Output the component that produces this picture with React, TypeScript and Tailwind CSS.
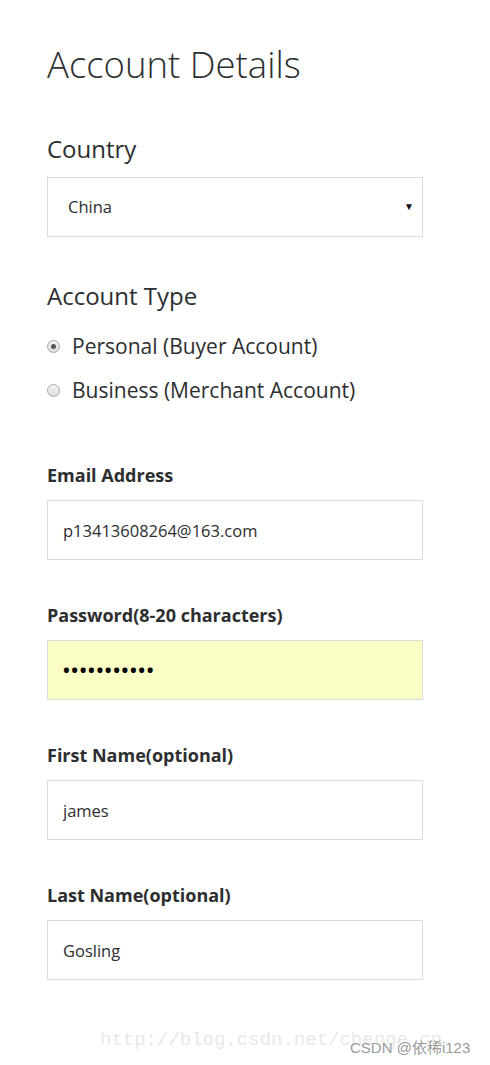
import { useState } from "react";

const labelCls = "block text-[18px] font-bold text-[#2c2e2f] leading-none";
const inputCls =
  "mt-[16px] block h-[60px] w-[376px] border border-[#dcdcdc] px-[15px] text-[16.5px] text-[#2c2e2f] outline-none";

export default function App() {
  const [type, setType] = useState("personal");

  return (
    <div className="relative min-h-[1065px] w-[490px] bg-white font-['Open_Sans',sans-serif] text-[#2c2e2f]">
      <div className="pl-[47px] pt-[40px]">
        <h1 className="text-[36.5px] font-light leading-[48px] text-[#2c2e2f]">Account Details</h1>

        {/* Country */}
        <h2 className="mt-[49px] text-[24px] font-medium leading-none">Country</h2>
        <div className="relative mt-[16px] flex h-[60px] w-[376px] items-center border border-[#dcdcdc] pl-[20px] text-[16.5px]">
          <span>China</span>
          <span className="absolute right-[8px] top-[21px] text-[10px] text-[#111]">▼</span>
        </div>

        {/* Account type */}
        <h2 className="mt-[47px] text-[24px] font-medium leading-none">Account Type</h2>
        <div className="mt-[26px] flex flex-col gap-[20px]">
          <label className="flex items-center gap-[12px] text-[21px] leading-[24px]">
            <span className="flex h-[13px] w-[13px] items-center justify-center rounded-full border border-[#a8a8a8] bg-gradient-to-b from-[#f4f4f4] to-[#dcdcdc]">
              {type === "personal" && <span className="h-[5px] w-[5px] rounded-full bg-[#555]" />}
            </span>
            <span onClick={() => setType("personal")}>Personal (Buyer Account)</span>
          </label>
          <label className="flex items-center gap-[12px] text-[21px] leading-[24px]">
            <span className="flex h-[13px] w-[13px] items-center justify-center rounded-full border border-[#a8a8a8] bg-gradient-to-b from-[#f4f4f4] to-[#dcdcdc]">
              {type === "business" && <span className="h-[5px] w-[5px] rounded-full bg-[#555]" />}
            </span>
            <span onClick={() => setType("business")}>Business (Merchant Account)</span>
          </label>
        </div>

        {/* Email */}
        <div className="mt-[64px]">
          <span className={labelCls}>Email Address</span>
          <input className={inputCls} defaultValue="p13413608264@163.com" />
        </div>

        <div className="mt-[46px]">
          <span className={labelCls}>Password(8-20 characters)</span>
          <div className="mt-[16px] flex h-[60px] w-[376px] items-center border border-[#dcdcdc] bg-[#fafec4] px-[15px] text-[18px] font-bold tracking-[1.6px] text-black">
            •••••••••••
          </div>
        </div>

        <div className="mt-[46px]">
          <span className={labelCls}>First Name(optional)</span>
          <input className={inputCls} defaultValue="james" />
        </div>

        <div className="mt-[46px]">
          <span className={labelCls}>Last Name(optional)</span>
          <input className={inputCls} defaultValue="Gosling" />
        </div>
      </div>

      {/* watermark */}
      <div className="absolute left-[100px] top-[1026px] font-['Liberation_Mono',monospace] text-[19px] text-[#e8e8e8]">
        http://blog.csdn.net/chenge_cn
      </div>
      <div className="absolute left-[350px] top-[1037px] font-['Liberation_Sans','Noto_Sans_CJK_SC',sans-serif] text-[15px] text-[#9a9a9a] [text-shadow:0_0_2px_#fff,0_0_2px_#fff]">
        CSDN @依稀i123
      </div>
    </div>
  );
}
